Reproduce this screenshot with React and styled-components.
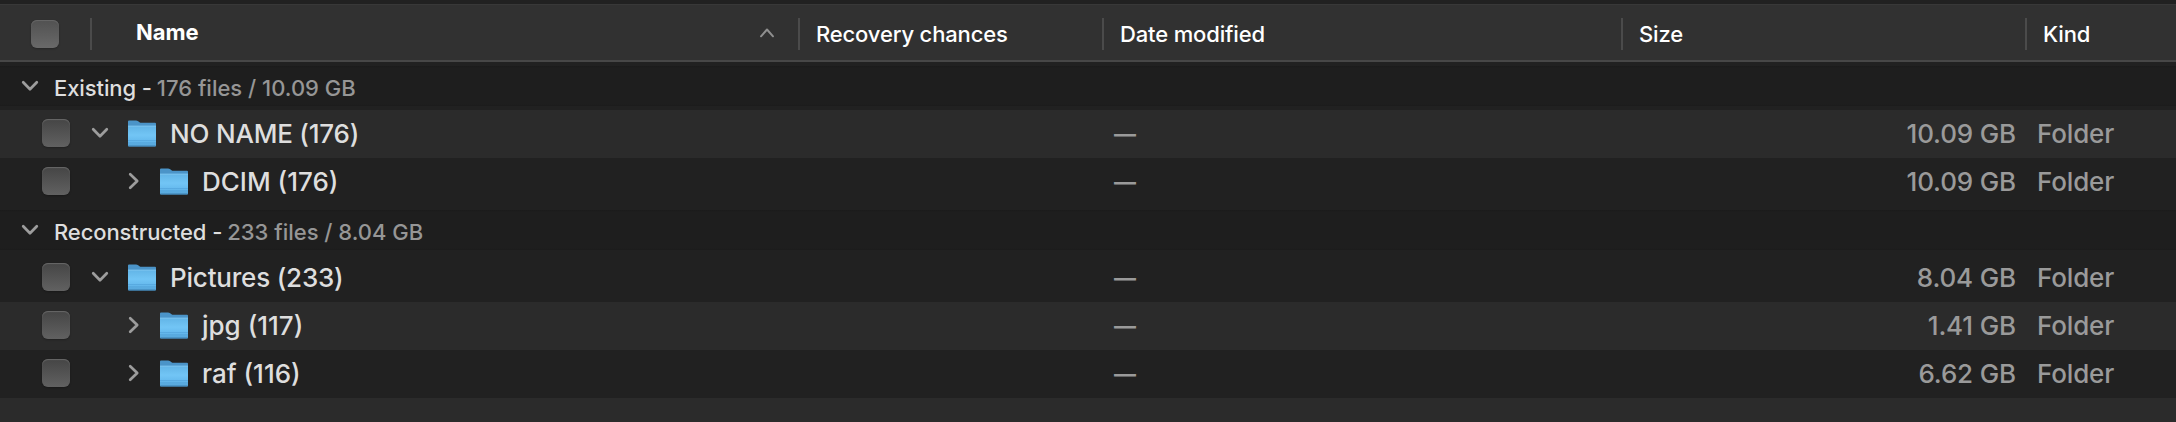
import React, { useState } from "react";
import styled, { createGlobalStyle } from "styled-components";

const groups = [
  {
    title: "Existing",
    info: "176 files / 10.09 GB",
    rows: [
      { name: "NO NAME (176)", size: "10.09 GB", level: 0, open: true, striped: true },
      { name: "DCIM (176)", size: "10.09 GB", level: 1 },
    ],
  },
  {
    title: "Reconstructed",
    info: "233 files / 8.04 GB",
    rows: [
      { name: "Pictures (233)", size: "8.04 GB", level: 0, open: true },
      { name: "jpg (117)", size: "1.41 GB", level: 1, striped: true },
      { name: "raf (116)", size: "6.62 GB", level: 1 },
    ],
  },
];

const ChevronDown = () => (
  <svg width="18" height="12" viewBox="0 0 18 12" fill="none">
    <path d="M2.2 2.2 9 9.2l6.8-7" stroke="#9d9d9d" strokeWidth="2.7" strokeLinecap="round" strokeLinejoin="round" />
  </svg>
);

const ChevronRight = () => (
  <svg width="12" height="18" viewBox="0 0 12 18" fill="none">
    <path d="M2.2 2.2 9.2 9l-7 6.8" stroke="#9d9d9d" strokeWidth="2.7" strokeLinecap="round" strokeLinejoin="round" />
  </svg>
);

const SortArrow = () => (
  <svg width="16" height="12" viewBox="0 0 16 12" fill="none">
    <path d="M2 9.3 8 2.5l6 6.8" stroke="#8f8f8f" strokeWidth="2" strokeLinecap="round" strokeLinejoin="round" />
  </svg>
);

const FolderIcon = () => (
  <svg width="28" height="27" viewBox="0 0 28 27">
    <defs>
      <linearGradient id="front" x1="0" y1="0" x2="0" y2="1">
        <stop offset="0" stopColor="#62b4e6" />
        <stop offset="0.45" stopColor="#72c5f5" />
        <stop offset="0.72" stopColor="#66baee" />
        <stop offset="1" stopColor="#54a3d8" />
      </linearGradient>
    </defs>
    <path d="M0 1.500Q0 .5 1 .5H8q1.200 0 2.200.8l1.300.9q.8.600 2 .600H27q1 0 1 1V10H0z" fill="#4b94c8" />
    <path d="M0 5.800h28V25.500q0 1-1 1H1q-1 0-1-1z" fill="url(#front)" />
    <path d="M0 6.200h28" stroke="#82c8f0" strokeWidth="0.8" />
    <path d="M0 20.500h28M0 22.800h28" stroke="#4a9bd3" strokeWidth="0.8" opacity="0.6" />
    <path d="M.5 26h27" stroke="#3f80b0" strokeWidth="1" />
  </svg>
);

const App = () => {
  const [closed, setClosed] = useState([]);

  // toggle a whole group
  const toggle = (title) => {
    setClosed((state) =>
      state.includes(title) ? state.filter((v) => v !== title) : [...state, title]
    );
  };

  return (
    <Wrap>
      <GlobalStyle />
      <Header>
        <CheckCell>
          <Checkbox />
        </CheckCell>
        <HeadCell $bold>
          <span>Name</span>
          <SortArrow />
        </HeadCell>
        <HeadCell>Recovery chances</HeadCell>
        <HeadCell>Date modified</HeadCell>
        <HeadCell>Size</HeadCell>
        <HeadCell>Kind</HeadCell>
      </Header>
      {groups.map((group) => (
        <Group key={group.title}>
          <GroupTitle onClick={() => toggle(group.title)}>
            <ChevronDown />
            <GroupName>{group.title} -</GroupName>
            <GroupInfo>{group.info}</GroupInfo>
          </GroupTitle>
          {!closed.includes(group.title) &&
            group.rows.map((row) => (
              <Row key={row.name} $striped={row.striped}>
                <NameCell $level={row.level}>
                  <Checkbox />
                  <Arrow $level={row.level}>
                    {row.open ? <ChevronDown /> : <ChevronRight />}
                  </Arrow>
                  <FolderIcon />
                  <span>{row.name}</span>
                </NameCell>
                <DateCell>—</DateCell>
                <SizeCell>{row.size}</SizeCell>
                <KindCell>Folder</KindCell>
              </Row>
            ))}
        </Group>
      ))}
      <EmptyRow />
    </Wrap>
  );
};

export default App;

const GlobalStyle = createGlobalStyle`
  * {
    box-sizing: border-box;
  }

  body {
    margin: 0;
    background: #212121;
    font-family: Inter, "Liberation Sans", sans-serif;
  }
`;

const Wrap = styled.main`
  display: flex;
  flex-direction: column;
  width: 2176px;
  height: 422px;
  padding-top: 4px;
  overflow: hidden;
  background: #212121;
  white-space: nowrap;
`;

const Header = styled.header`
  display: grid;
  grid-template-columns: 90px 708px 304px 519px 404px 1fr;
  flex: none;
  height: 58px;
  padding-top: 13px;
  background: #313131;
  border-top: 1px solid #383838;
  border-bottom: 2px solid #474747;
`;

const CheckCell = styled.div`
  padding: 2px 0 0 31px;
`;

const Checkbox = styled.div`
  flex: none;
  width: 28px;
  height: 28px;
  border-radius: 6px;
  background: linear-gradient(#454545, #616161);
  box-shadow: inset 0 1px 1px #686868, 0 1px 2px rgba(0, 0, 0, 0.25);

  ${CheckCell} & {
    background: linear-gradient(#515151, #696969);
  }
`;

const HeadCell = styled.div`
  display: flex;
  justify-content: space-between;
  height: 32px;
  padding-left: ${(props) => (props.$bold ? "44px" : "16px")};
  padding-right: ${(props) => (props.$bold ? "23px" : "0")};
  border-left: 2px solid #4b4b4b;
  color: #ffffff;
  font-size: 22px;
  font-weight: ${(props) => (props.$bold ? 700 : 500)};
  letter-spacing: ${(props) => (props.$bold ? "0" : "-0.15px")};
  line-height: ${(props) => (props.$bold ? "28px" : "32px")};

  svg {
    margin-top: 9px;
  }
`;

const Group = styled.section`
  flex: none;
`;

const GroupTitle = styled.div`
  display: flex;
  align-items: center;
  height: 48px;
  padding-left: 21px;
  font-size: 22px;
  font-weight: 500;
  background: linear-gradient(#212121 4px, #1b1b1b 4px, #1e1e1e 6px, #1e1e1e 42px, #1b1b1b 44px, #212121 44px);

  svg {
    margin-top: -1px;
  }
`;

const GroupName = styled.span`
  margin-left: 15px;
  padding-top: 3px;
  color: #dedede;
  letter-spacing: -0.1px;
`;

const GroupInfo = styled.span`
  margin-left: 5px;
  padding-top: 3px;
  color: #969696;
`;

const Row = styled.div`
  display: grid;
  grid-template-columns: 1114px 510px 392px 1fr;
  align-items: center;
  height: 48px;
  color: #9a9a9a;
  font-size: 26px;
  font-weight: 450;
  letter-spacing: -0.15px;
  background: ${(props) => (props.$striped ? "#2b2b2b" : "#212121")};
`;

const NameCell = styled.div`
  display: flex;
  align-items: center;
  padding: 0 0 2px 42px;
  color: #dedede;
  letter-spacing: ${(props) => (props.$level ? "0" : "-0.2px")};

  > span {
    margin-left: 14px;
  }
`;

const Arrow = styled.div`
  display: flex;
  justify-content: center;
  width: 20px;
  margin-left: ${(props) => (props.$level ? "54px" : "20px")};
  margin-right: ${(props) => (props.$level ? "16px" : "18px")};
`;

const DateCell = styled.div`
  font-size: 22px;
  font-weight: 700;
`;

const SizeCell = styled.div`
  padding-bottom: 2px;
  text-align: right;
`;

const KindCell = styled.div`
  padding: 0 0 2px 21px;
`;

const EmptyRow = styled.div`
  flex: 1;
  background: #2b2b2b;
`;
